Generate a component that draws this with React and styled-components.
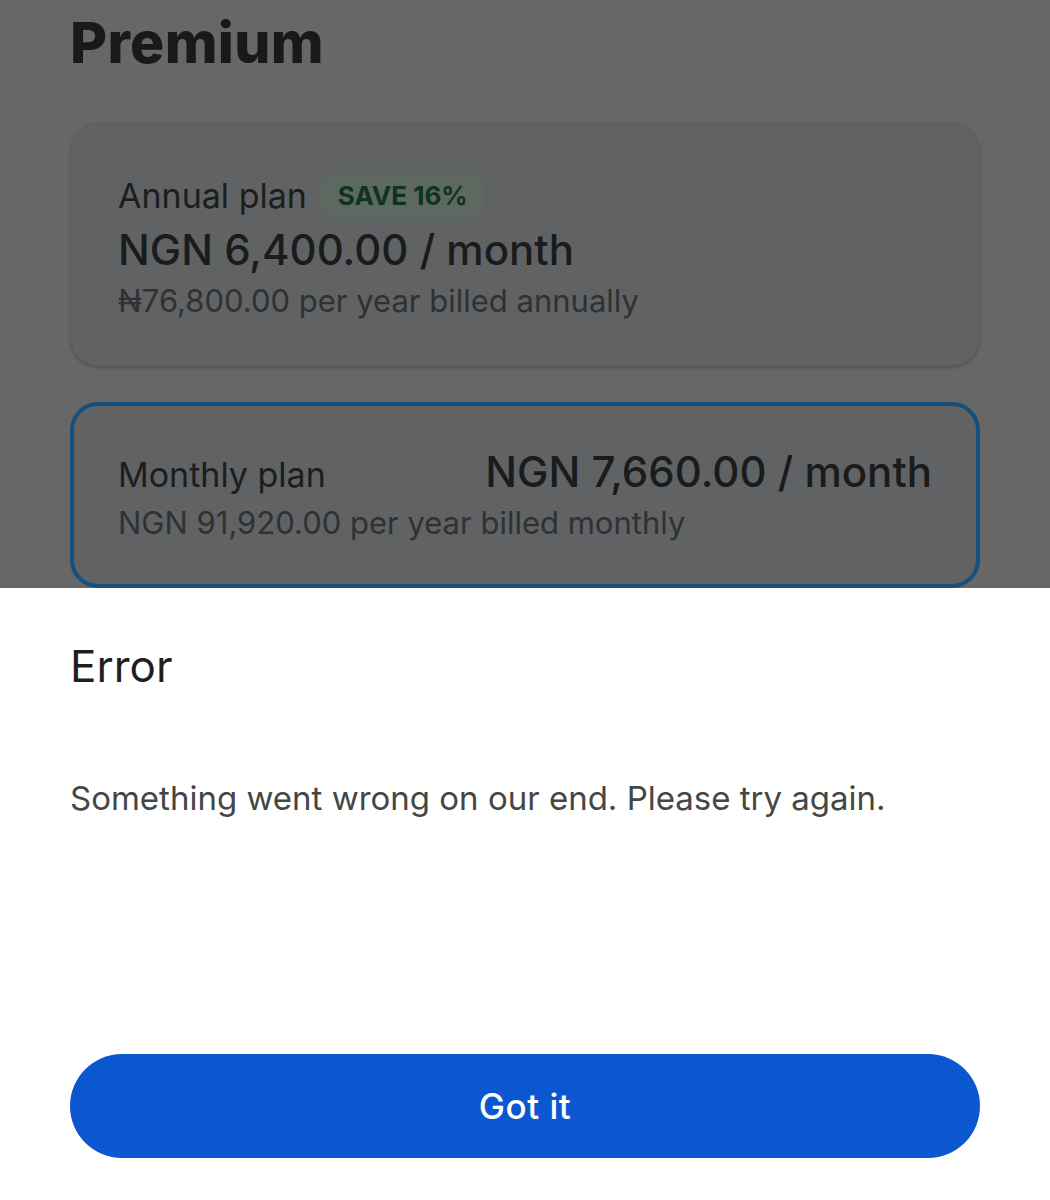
import React from "react";
import styled, { createGlobalStyle } from "styled-components";

const Global = createGlobalStyle`
  html, body { margin: 0; padding: 0; background: #676767; }
  body { font-family: Inter, Roboto, sans-serif; }
  * { box-sizing: border-box; }
`;

const Screen = styled.div`
  width: 1050px;
  height: 1200px;
  display: flex;
  flex-direction: column;
  overflow: hidden;
`;

const Backdrop = styled.div`
  height: 588px;
  flex: none;
  overflow: hidden;
  background: #676767;
  padding: 0 70px;
  display: flex;
  flex-direction: column;
`;

const Title = styled.h1`
  margin: 0;
  padding-top: 8px;
  font-family: Inter, Roboto, sans-serif;
  font-weight: 800;
  font-size: 57px;
  line-height: 70px;
  color: #18191a;
  letter-spacing: 0.3px;
`;

const PlanCard = styled.div`
  margin-top: ${(p) => p.$mt}px;
  border-radius: 28px;
  background: #606263;
  border: ${(p) => (p.$selected ? "4px solid #17507c" : "1px solid #5a5c5d")};
  box-shadow: ${(p) => (p.$selected ? "none" : "0 2px 3px rgba(0,0,0,0.18)")};
  padding: ${(p) => p.$pad};
  display: flex;
  flex-direction: column;
  flex: none;
`;

const Row = styled.div`
  display: flex;
  align-items: ${(p) => p.$align || "center"};
  justify-content: ${(p) => p.$justify || "flex-start"};
  gap: 15px;
`;

const PlanName = styled.span`
  font-size: 34px;
  line-height: 44px;
  color: #1c1d1e;
`;

const Badge = styled.span`
  background: #5d6860;
  color: #0f3320;
  font-weight: 700;
  font-size: 26px;
  line-height: 48px;
  padding: 0 16px;
  border-radius: 16px;
`;

const Price = styled.div`
  font-size: 42px;
  line-height: 59px;
  color: #1a1b1c;
  font-weight: 500;
`;

const Sub = styled.div`
  font-size: 31px;
  line-height: 43px;
  color: #2f3133;
`;

const Sheet = styled.div`
  flex: 1;
  background: #ffffff;
  padding: 50px 70px 0 70px;
  display: flex;
  flex-direction: column;
`;

const SheetTitle = styled.h2`
  margin: 0;
  font-weight: 400;
  font-size: 44px;
  line-height: 56px;
  color: #1f1f1f;
`;

const SheetBody = styled.p`
  margin: 82px 0 0 0;
  font-size: 33px;
  line-height: 44px;
  color: #444746;
`;

const PrimaryButton = styled.button`
  margin-top: 234px;
  width: 100%;
  height: 104px;
  flex: none;
  border: none;
  border-radius: 52px;
  background: #0b57d0;
  color: #ffffff;
  font-family: Inter, Roboto, sans-serif;
  font-size: 35px;
  font-weight: 500;
  letter-spacing: 0.5px;
  cursor: pointer;
`;

export default function App() {
  return (
    <>
      <Global />
      <Screen>
        <Backdrop>
          <Title>Premium</Title>
          <PlanCard $mt={45} $pad="48px 47px 43px 47px">
            <Row>
              <PlanName>Annual plan</PlanName>
              <Badge>SAVE 16%</Badge>
            </Row>
            <Price>NGN 6,400.00 / month</Price>
            <Sub>₦76,800.00 per year billed annually</Sub>
          </PlanCard>
          <PlanCard $selected $mt={36} $pad="36px 44px 40px 44px">
            <Row $justify="space-between" $align="baseline">
              <PlanName>Monthly plan</PlanName>
              <Price>NGN 7,660.00 / month</Price>
            </Row>
            <Sub>NGN 91,920.00 per year billed monthly</Sub>
          </PlanCard>
        </Backdrop>
        <Sheet>
          <SheetTitle>Error</SheetTitle>
          <SheetBody>Something went wrong on our end. Please try again.</SheetBody>
          <PrimaryButton>Got it</PrimaryButton>
        </Sheet>
      </Screen>
    </>
  );
}
